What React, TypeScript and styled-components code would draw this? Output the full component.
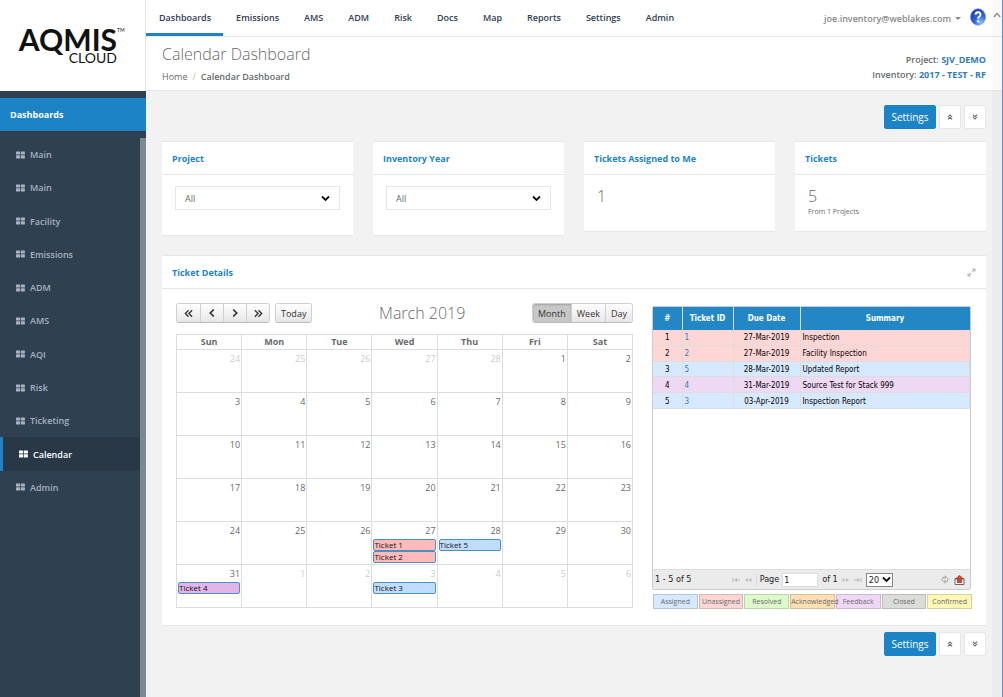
import React from "react";
import styled, { createGlobalStyle, css } from "styled-components";

const blue = "#1c84c6";
const line = "#e7e7e7";

const Global = createGlobalStyle`
  *, *::before, *::after { box-sizing: border-box; }
  body { margin: 0; background: #f2f2f2; color: #676a6c; font: 9px/13px "Open Sans", sans-serif; }
  button, input, select { font: inherit; color: inherit; margin: 0; }
  h1, h2, h3, p, ul { margin: 0; padding: 0; font-weight: inherit; font-size: inherit; }
  ul { list-style: none; }
  a { color: inherit; text-decoration: none; }
  table { border-collapse: collapse; border-spacing: 0; }
`;

const Page = styled.div`
  display: grid;
  grid-template-columns: 146px minmax(0, 1fr);
  min-height: 100vh;
`;

/* ---------- side bar ---------- */
const Sidebar = styled.aside`
  display: flex;
  flex-direction: column;
  background: #2f4050;
`;
const Logo = styled.div`
  display: flex;
  flex-direction: column;
  align-items: flex-end;
  height: 91px;
  padding: 26px 28px 0 0;
  background: #fff;
  border-right: 1px solid ${line};
  color: #111;
  font-family: Lato, sans-serif;
`;
const LogoName = styled.span`
  display: flex;
  align-items: flex-start;
  font-size: 30px;
  line-height: 27px;
  font-weight: 700;
`;
const LogoMark = styled.sup`
  width: 0;
  font-size: 5px;
  line-height: 8px;
  font-weight: 400;
`;
const LogoSub = styled.span`
  font-size: 14px;
  line-height: 10px;
`;
const SideTitle = styled.h2`
  margin-top: 7px;
  padding: 0 10px;
  background: ${blue};
  color: #fff;
  font-weight: 700;
  line-height: 33px;
`;
const SideList = styled.nav`
  flex: 1;
  margin-top: 7px;
  border-right: 6px solid #7a8993;
`;
const SideItems = styled.ul`
  display: grid;
  grid-auto-rows: 1fr;
  height: 366px;
`;
const SideLink = styled.a<{ $active?: boolean }>`
  display: flex;
  align-items: center;
  gap: 5px;
  height: 100%;
  padding-left: 16px;
  color: #a7b1c2;
  font-weight: 600;
  ${(p) =>
    p.$active &&
    css`
      border-left: 3px solid ${blue};
      background: #293846;
      color: #fff;
    `}
`;

/* ---------- top ---------- */
const Main = styled.div`
  min-width: 0;
`;
const TopBar = styled.header`
  display: flex;
  align-items: center;
  height: 37px;
  padding-right: 17px;
  background: #fff;
  border-bottom: 1px solid ${line};
`;
const TopNav = styled.nav`
  display: flex;
  flex: 1;
`;
const TopLink = styled.a<{ $active?: boolean }>`
  padding: 0 12px 0 13px;
  height: 36px;
  line-height: 35px;
  color: #2f4050;
  font-weight: 600;
  border-bottom: 3px solid ${(p) => (p.$active ? blue : "transparent")};
`;
const UserMenu = styled.button`
  display: flex;
  align-items: center;
  gap: 4px;
  margin-right: 9px;
  padding: 0;
  border: 0;
  background: none;
  color: #888;
  font-weight: 600;
`;
const Caret = styled.i`
  border: 3px solid transparent;
  border-top-color: currentColor;
  border-bottom: 0;
`;
const HelpButton = styled.button`
  padding: 0 0 3px;
  border: 0;
  background: none;
  height: 21px;
`;
const Heading = styled.div`
  display: flex;
  justify-content: space-between;
  align-items: center;
  height: 54px;
  padding: 0 17px 0 16px;
  background: #fff;
  border-bottom: 1px solid ${line};
`;
const Title = styled.h1`
  font-size: 16px;
  line-height: 26px;
  font-weight: 300;
`;
const Crumbs = styled.nav`
  display: flex;
  gap: 5px;
  line-height: 20px;
  & > span { color: #bbb; }
  & strong { font-weight: 600; }
`;
const Context = styled.p`
  padding-top: 7px;
  text-align: right;
  line-height: 15px;
  font-weight: 600;
  & a { color: #337ab7; font-weight: 700; }
`;

/* ---------- body ---------- */
const Body = styled.main`
  padding: 14px 17px 40px 16px;
`;
const Actions = styled.div`
  display: flex;
  justify-content: flex-end;
  gap: 3px;
`;
const Settings = styled.button`
  width: 52px;
  height: 24px;
  padding: 0;
  border: 1px solid ${blue};
  border-radius: 2px;
  background: ${blue};
  color: #fff;
  font-size: 10px;
`;
const Square = styled.button`
  display: grid;
  place-items: center;
  width: 22px;
  height: 24px;
  padding: 0;
  border: 1px solid ${line};
  border-radius: 2px;
  background: #fff;
`;
const Cards = styled.div`
  display: grid;
  grid-template-columns: repeat(4, minmax(0, 1fr));
  align-items: start;
  gap: 20px;
  margin: 12px 0 20px;
`;
const Card = styled.section`
  background: #fff;
  border-top: 1px solid ${line};
  box-shadow: 0 1px 0 ${line};
`;
const CardHead = styled.header`
  display: flex;
  justify-content: space-between;
  align-items: center;
  height: 33px;
  padding: 0 10px;
  border-bottom: 1px solid ${line};
  color: ${blue};
  font-weight: 700;
`;
const FilterBody = styled.div`
  display: grid;
  align-items: center;
  padding: 11px 13px 25px;
`;
const Filter = styled.select`
  grid-area: 1 / 1;
  width: 100%;
  height: 24px;
  padding: 0 9px;
  appearance: none;
  background: #fff;
  border: 1px solid ${line};
  border-radius: 0;
`;
const FilterArrow = styled.svg`
  grid-area: 1 / 1;
  justify-self: end;
  margin-right: 10px;
  pointer-events: none;
`;
const Stat = styled.div`
  height: 56px;
  padding: 12px 13px;
`;
const StatValue = styled.p`
  font-size: 16px;
  line-height: 18px;
  font-weight: 300;
`;
const StatNote = styled.p`
  font-size: 7px;
  line-height: 14px;
`;
const Expand = styled.button`
  display: grid;
  padding: 0;
  border: 0;
  background: none;
  color: #b8b8b8;
`;
const Details = styled.div`
  display: grid;
  grid-template-columns: minmax(0, 457fr) minmax(0, 319fr);
  gap: 19px;
  padding: 14px 15px 16px 14px;
  margin-bottom: 7px;
`;

/* ---------- calendar ---------- */
const CalBar = styled.div`
  display: flex;
  justify-content: space-between;
  align-items: center;
  height: 20px;
  margin-bottom: 11px;
`;
const CalGroup = styled.div`
  display: flex;
  gap: 5px;
`;
const Joined = styled.div`
  display: flex;
  border: 1px solid #d0d0d0;
  border-bottom-color: #bbb;
  border-radius: 3px;
  overflow: hidden;
`;
const CalButton = styled.button<{ $on?: boolean; $icon?: boolean }>`
  display: grid;
  place-items: center;
  height: 18px;
  width: ${(p) => (p.$icon ? "23px" : "auto")};
  padding: ${(p) => (p.$icon ? "0" : "0 5px")};
  border: 0;
  color: #333;
  background: ${(p) => (p.$on ? "#c8c8c8" : "linear-gradient(#fff, #e6e6e6)")};
  box-shadow: ${(p) => (p.$on ? "inset 0 1px 2px rgba(0,0,0,.2)" : "none")};
  & + & { border-left: 1px solid #d0d0d0; }
`;
const Month = styled.h2`
  font-size: 16px;
  line-height: 20px;
  font-weight: 300;
`;
const Calendar = styled.table`
  width: 100%;
  table-layout: fixed;
  & th, & td { border: 1px solid #ddd; padding: 0; }
  & th { height: 15px; font-weight: 700; line-height: 14px; }
  & td { height: 43px; vertical-align: top; }
`;
const DayNumber = styled.div<{ $other: boolean }>`
  padding: 1px;
  line-height: 15px;
  text-align: right;
  color: ${(p) => (p.$other ? "#ccc" : "#676a6c")};
`;
const tones = { red: "#ffbbbb", blue: "#c0dcff", purple: "#e2b4e8" };
const Event = styled.a<{ $tone: keyof typeof tones }>`
  display: block;
  height: 12px;
  margin: 0 1px;
  border: 1px solid #4a90c0;
  border-radius: 2px;
  background: ${(p) => tones[p.$tone]};
  color: #111;
  font-size: 8px;
  line-height: 10px;
`;

/* ---------- ticket grid ---------- */
const GridSide = styled.div`
  padding-top: 3px;
`;
const GridBox = styled.div`
  display: flex;
  flex-direction: column;
  height: 284px;
  border: 1px solid #ccc;
  border-radius: 2px;
  color: #000;
  font-family: "DejaVu Sans Condensed", "DejaVu Sans", sans-serif;
  font-size: 8px;
`;
const Tickets = styled.table`
  width: 100%;
  height: 102px;
  table-layout: fixed;
  & th {
    height: 23px;
    padding: 0;
    background: #2387c5;
    color: #fff;
    font-weight: 700;
    border-right: 1px solid #dcdcdc;
  }
  & th:last-child { border-right: 0; }
  & td {
    padding: 2px 2px 0;
    line-height: 12px;
    border: 1px solid #ddd;
    border-top: 0;
    border-left: 0;
    white-space: nowrap;
  }
  & td:nth-child(1), & td:nth-child(3) { text-align: center; }
  & a { color: #337ab7; }
`;
const rowTones: Record<string, string> = { red: "#ffd6d6", blue: "#d6e9ff", purple: "#efd8f4" };
const TicketRow = styled.tr<{ $tone: string }>`
  background: ${(p) => rowTones[p.$tone]};
`;
const Pager = styled.div`
  display: flex;
  align-items: center;
  height: 20px;
  margin-top: auto;
  padding: 0 5px 0 2px;
  background: #ebebeb;
  border-top: 1px solid #ddd;
  color: #222;
  font-size: 9px;
`;
const PagerCenter = styled.div`
  display: flex;
  align-items: center;
  flex: 1;
  justify-content: center;
  gap: 4px;
  padding-right: 8px;
`;
const PagerButton = styled.button`
  display: grid;
  padding: 0;
  border: 0;
  background: none;
  color: #bbb;
`;
const PageLabel = styled.label`
  display: flex;
  align-items: center;
  gap: 3px;
  padding-left: 3px;
  border-left: 1px solid #ddd;
`;
const PageInput = styled.input`
  width: 36px;
  height: 14px;
  padding: 0 1px;
  border: 1px solid #ddd;
  background: #fff;
`;
const PageSize = styled.span`
  display: grid;
  align-items: center;
`;
const PageSelect = styled.select`
  grid-area: 1 / 1;
  width: 27px;
  height: 14px;
  padding: 0 2px;
  appearance: none;
  background: #fff;
  border: 1px solid #888;
  border-radius: 0;
`;
const SizeArrow = styled(FilterArrow)`
  margin-right: 2px;
`;
const PagerTools = styled.div`
  display: flex;
  align-items: center;
  gap: 5px;
`;
const Legend = styled.ul`
  display: grid;
  grid-template-columns: repeat(7, minmax(0, 1fr));
  gap: 1px;
  margin: 4px -1px 0 1px;
`;
/* a long label may run over the box that follows it */
const LegendItem = styled.li<{ $bg: string; $long: boolean }>`
  z-index: ${(p) => (p.$long ? 1 : 0)};
  height: 15px;
  border: 1px solid rgba(0, 0, 0, 0.15);
  background: ${(p) => p.$bg};
  font-size: 7px;
  line-height: 14px;
  text-align: center;
  white-space: nowrap;
`;

/* ---------- window scroll track ---------- */
const Track = styled.div`
  position: fixed;
  inset: 0 0 0 auto;
  width: 11px;
  padding: 9px 0 0 1px;
  background: rgba(0, 0, 0, 0.025);
  border-right: 1px solid #5d8fe0;
`;

const GridIcon = () => (
  <svg width="9" height="8" viewBox="0 0 9 8" fill="currentColor">
    <rect width="4.1" height="3.2" y="0.4" rx=".4" />
    <rect x="4.8" y="0.4" width="4.1" height="3.2" rx=".4" />
    <rect y="4.3" width="4.1" height="3.2" rx=".4" />
    <rect x="4.8" y="4.3" width="4.1" height="3.2" rx=".4" />
  </svg>
);
const DoubleChevron = ({ turn = 0, size = 6, weight = 1.4 }) => (
  <svg width={size} height={size} viewBox="0 0 8 8" fill="none" stroke="currentColor" strokeWidth={weight}>
    <g transform={`rotate(${turn} 4 4)`}>
      <path d="M1.2 4 4 1.2 6.8 4M1.2 7.2 4 4.4 6.8 7.2" />
    </g>
  </svg>
);
const Chevron = ({ d }: { d: string }) => (
  <svg width="8" height="10" viewBox="0 0 8 10" fill="none" stroke="currentColor" strokeWidth="1.7">
    <path d={d} />
  </svg>
);
const PageArrow = ({ flip, bar }: { flip?: boolean; bar?: boolean }) => (
  <svg width="8" height="6" viewBox="0 0 8 6">
    <g transform={flip ? "translate(8 0) scale(-1 1)" : undefined}>
      {bar ? (
        <path d="M1 1v4M4.5 3H8" stroke="currentColor" fill="none" />
      ) : (
        <path d="M4 1v4L1 3z" fill="currentColor" />
      )}
      <path d={bar ? "M5 1v4L2 3z" : "M7.5 1v4L4.5 3z"} fill="currentColor" />
    </g>
  </svg>
);
const down = "M1 1.5 4.5 5 8 1.5";

const nav = ["Dashboards", "Emissions", "AMS", "ADM", "Risk", "Docs", "Map", "Reports", "Settings", "Admin"];
const side = ["Main", "Main", "Facility", "Emissions", "ADM", "AMS", "AQI", "Risk", "Ticketing", "Calendar", "Admin"];
const days = ["Sun", "Mon", "Tue", "Wed", "Thu", "Fri", "Sat"];
const firstShown = new Date(2019, 1, 24);
const cells = Array.from({ length: 42 }, (_, i) => {
  const d = new Date(2019, 1, firstShown.getDate() + i);
  return { day: d.getDate(), month: d.getMonth() + 1 };
});
const tickets: { id: number; due: string; key: string; tone: keyof typeof tones; summary: string }[] = [
  { id: 1, due: "27-Mar-2019", key: "3-27", tone: "red", summary: "Inspection" },
  { id: 2, due: "27-Mar-2019", key: "3-27", tone: "red", summary: "Facility Inspection" },
  { id: 5, due: "28-Mar-2019", key: "3-28", tone: "blue", summary: "Updated Report" },
  { id: 4, due: "31-Mar-2019", key: "3-31", tone: "purple", summary: "Source Test for Stack 999" },
  { id: 3, due: "03-Apr-2019", key: "4-3", tone: "blue", summary: "Inspection Report" },
];
const legend = [
  ["Assigned", "#d6e9ff"],
  ["Unassigned", "#ffd6d6"],
  ["Resolved", "#defacb"],
  ["Acknowledged", "#ffdfb4"],
  ["Feedback", "#efd8f6"],
  ["Closed", "#dcddd8"],
  ["Confirmed", "#fdf7b8"],
];

const ActionRow = () => (
  <Actions>
    <Settings>Settings</Settings>
    <Square aria-label="Collapse all"><DoubleChevron /></Square>
    <Square aria-label="Expand all"><DoubleChevron turn={180} /></Square>
  </Actions>
);

const FilterCard = ({ id, label }: { id: string; label: string }) => (
  <Card>
    <CardHead><label htmlFor={id}>{label}</label></CardHead>
    <FilterBody>
      <Filter id={id}><option>All</option></Filter>
      <FilterArrow width="9" height="7" fill="none" stroke="#111" strokeWidth="1.8"><path d={down} /></FilterArrow>
    </FilterBody>
  </Card>
);

const StatCard = ({ label, value, note }: { label: string; value: number; note?: string }) => (
  <Card>
    <CardHead><h3>{label}</h3></CardHead>
    <Stat>
      <StatValue>{value}</StatValue>
      {note && <StatNote>{note}</StatNote>}
    </Stat>
  </Card>
);

const MonthView = () => (
  <div>
    <CalBar>
      <CalGroup>
        <Joined>
          <CalButton $icon aria-label="Previous year"><DoubleChevron turn={-90} size={9} weight={1.2} /></CalButton>
          <CalButton $icon aria-label="Previous month"><Chevron d="M5.8 1.5 2.3 5 5.8 8.5" /></CalButton>
          <CalButton $icon aria-label="Next month"><Chevron d="M2.2 1.5 5.7 5 2.2 8.5" /></CalButton>
          <CalButton $icon aria-label="Next year"><DoubleChevron turn={90} size={9} weight={1.2} /></CalButton>
        </Joined>
        <Joined><CalButton>Today</CalButton></Joined>
      </CalGroup>
      <Month>March 2019</Month>
      <CalGroup>
        <Joined>
          <CalButton $on>Month</CalButton>
          <CalButton>Week</CalButton>
          <CalButton>Day</CalButton>
        </Joined>
      </CalGroup>
    </CalBar>
    <Calendar>
      <thead>
        <tr>{days.map((d) => <th key={d} scope="col">{d}</th>)}</tr>
      </thead>
      <tbody>
        {[0, 1, 2, 3, 4, 5].map((w) => (
          <tr key={w}>
            {cells.slice(w * 7, w * 7 + 7).map((c) => (
              <td key={`${c.month}-${c.day}`}>
                <DayNumber $other={c.month !== 3}>{c.day}</DayNumber>
                {tickets
                  .filter((t) => t.key === `${c.month}-${c.day}`)
                  .map((t) => <Event key={t.id} href="#" $tone={t.tone}>Ticket {t.id}</Event>)}
              </td>
            ))}
          </tr>
        ))}
      </tbody>
    </Calendar>
  </div>
);

const TicketGrid = () => (
  <GridSide>
    <GridBox>
      <Tickets>
        <colgroup>
          <col style={{ width: 29 }} />
          <col style={{ width: 51 }} />
          <col style={{ width: 67 }} />
          <col />
        </colgroup>
        <thead>
          <tr><th>#</th><th>Ticket ID</th><th>Due Date</th><th>Summary</th></tr>
        </thead>
        <tbody>
          {tickets.map((t, i) => (
            <TicketRow key={t.id} $tone={t.tone}>
              <td>{i + 1}</td>
              <td><a href="#">{t.id}</a></td>
              <td>{t.due}</td>
              <td>{t.summary}</td>
            </TicketRow>
          ))}
        </tbody>
      </Tickets>
      <Pager>
        <span>1 - 5 of 5</span>
        <PagerCenter>
          <PagerButton aria-label="First page"><PageArrow bar /></PagerButton>
          <PagerButton aria-label="Previous page"><PageArrow /></PagerButton>
          <PageLabel>Page <PageInput defaultValue="1" /></PageLabel>
          <span>of 1</span>
          <PagerButton aria-label="Next page"><PageArrow flip /></PagerButton>
          <PagerButton aria-label="Last page"><PageArrow flip bar /></PagerButton>
          <PageSize>
            <PageSelect aria-label="Rows per page"><option>20</option></PageSelect>
            <SizeArrow width="9" height="7" fill="none" stroke="#111" strokeWidth="1.8"><path d={down} /></SizeArrow>
          </PageSize>
        </PagerCenter>
        <PagerTools>
          <PagerButton aria-label="Refresh">
            <svg width="8" height="9" viewBox="0 0 8 9" fill="none" stroke="#888">
              <path d="M1.2 6V4.2Q1.2 2.2 3.4 2.2H5M3.8.6 5.4 2.2 3.8 3.8M6.8 3v1.8Q6.8 6.8 4.6 6.8H3M4.2 5.2 2.6 6.8 4.2 8.4" strokeWidth=".8" />
            </svg>
          </PagerButton>
          <PagerButton aria-label="Export">
            <svg width="11" height="10" viewBox="0 0 11 10">
              <path d="M1 3.5h9v6H1z" fill="#eee" stroke="#667" />
              <path d="M5.5.3 9.3 4H7.5v3.5h-4V4H1.7z" fill="#d9432f" stroke="#7c2418" strokeWidth=".6" />
            </svg>
          </PagerButton>
        </PagerTools>
      </Pager>
    </GridBox>
    <Legend>
      {legend.map(([name, bg]) => (
        <LegendItem key={name} $bg={bg} $long={name.length > 10}>{name}</LegendItem>
      ))}
    </Legend>
  </GridSide>
);

export default function App() {
  return (
    <Page>
      <Global />
      <Sidebar>
        <Logo>
          <LogoName>AQMIS<LogoMark>TM</LogoMark></LogoName>
          <LogoSub>CLOUD</LogoSub>
        </Logo>
        <SideTitle>Dashboards</SideTitle>
        <SideList>
          <SideItems>
            {side.map((s, i) => (
              <li key={i}>
                <SideLink href="#" $active={s === "Calendar"}><GridIcon />{s}</SideLink>
              </li>
            ))}
          </SideItems>
        </SideList>
      </Sidebar>
      <Main>
        <TopBar>
          <TopNav>
            {nav.map((n, i) => <TopLink key={n} href="#" $active={i === 0}>{n}</TopLink>)}
          </TopNav>
          <UserMenu>joe.inventory@weblakes.com<Caret /></UserMenu>
          <HelpButton aria-label="Help">
            <svg width="16" height="18" viewBox="0 0 16 18">
              <defs>
                <radialGradient id="orb" cx=".7" cy=".85" r=".9">
                  <stop offset="0" stopColor="#8fc0ff" />
                  <stop offset=".5" stopColor="#2b62d9" />
                  <stop offset="1" stopColor="#1a3fb4" />
                </radialGradient>
              </defs>
              <ellipse cx="8" cy="9" rx="7.6" ry="8.3" fill="url(#orb)" stroke="#7d97d8" strokeWidth=".6" />
              <path d="M5.6 6.8Q5.6 4.3 8.1 4.3T10.5 6.5Q10.5 7.8 9.3 8.6T8.1 10.8" fill="none" stroke="#fff" strokeWidth="1.9" />
              <circle cx="8.1" cy="13.3" r="1.2" fill="#fff" />
            </svg>
          </HelpButton>
        </TopBar>
        <Heading>
          <div>
            <Title>Calendar Dashboard</Title>
            <Crumbs><a href="#">Home</a><span>/</span><strong>Calendar Dashboard</strong></Crumbs>
          </div>
          <Context>
            Project: <a href="#">SJV_DEMO</a><br />
            Inventory: <a href="#">2017 - TEST - RF</a>
          </Context>
        </Heading>
        <Body>
          <ActionRow />
          <Cards>
            <FilterCard id="project" label="Project" />
            <FilterCard id="year" label="Inventory Year" />
            <StatCard label="Tickets Assigned to Me" value={1} />
            <StatCard label="Tickets" value={5} note="From 1 Projects" />
          </Cards>
          <Card>
            <CardHead>
              <h3>Ticket Details</h3>
              <Expand aria-label="Full screen">
                <svg width="9" height="9" viewBox="0 0 9 9" fill="currentColor">
                  <path d="M5 .5h3.5V4L7.3 2.8 5.8 4.3 4.7 3.2 6.2 1.7zM4 8.5H.5V5l1.2 1.2 1.5-1.5 1.1 1.1-1.5 1.5z" />
                </svg>
              </Expand>
            </CardHead>
            <Details>
              <MonthView />
              <TicketGrid />
            </Details>
          </Card>
          <ActionRow />
        </Body>
      </Main>
      <Track>
        <svg width="8" height="8" viewBox="0 0 8 8" fill="none" stroke="#888" strokeWidth="1.2"><path d="M.8 6 4 2.5 7.2 6" /></svg>
      </Track>
    </Page>
  );
}
